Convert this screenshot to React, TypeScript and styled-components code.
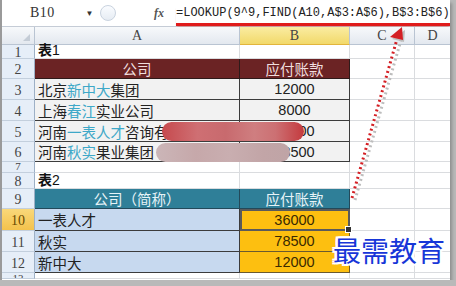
import styled, { createGlobalStyle, css } from "styled-components";

const GlobalStyle = createGlobalStyle`
  body {
    margin: 0;
    background: #b9b9b9;
    font-family: "Noto Sans CJK SC", "Liberation Sans", sans-serif;
  }
`;

type Kind = "plain" | "t1head" | "t1" | "t2head" | "t2a" | "t2b";
type Piece = [string, boolean?];

interface IRow {
  n: number;
  h: number;
  label?: string;
  kind?: "t1head" | "t1" | "t2head" | "t2";
  a?: Piece[];
  b?: string;
  clip?: "top" | "bottom";
}

const rows: IRow[] = [
  { n: 1, h: 14, label: "1" },
  { n: 2, h: 20, kind: "t1head", a: [["公司"]], b: "应付账款" },
  { n: 3, h: 21, kind: "t1", a: [["北京"], ["新中大", true], ["集团"]], b: "12000" },
  { n: 4, h: 21, kind: "t1", a: [["上海"], ["春江", true], ["实业公司"]], b: "8000" },
  { n: 5, h: 21, kind: "t1", a: [["河南"], ["一表人才", true], ["咨询有"]], b: "36000" },
  { n: 6, h: 20, kind: "t1", a: [["河南"], ["秋实", true], ["果业集团"]], b: "78500" },
  { n: 7, h: 11, clip: "bottom" },
  { n: 8, h: 16, label: "2" },
  { n: 9, h: 20, kind: "t2head", a: [["公司（简称）"]], b: "应付账款" },
  { n: 10, h: 22, kind: "t2", a: [["一表人才"]], b: "36000" },
  { n: 11, h: 21, kind: "t2", a: [["秋实"]], b: "78500" },
  { n: 12, h: 21, kind: "t2", a: [["新中大"]], b: "12000" },
  { n: 13, h: 6, clip: "top" },
];

export default function App() {
  return (
    <>
      <GlobalStyle />
      <Frame>
        <FormulaBar>
          <NameBox>
            <span>B10</span>
            <DropArrow>▼</DropArrow>
          </NameBox>
          <CancelDot />
          <Fx>fx</Fx>
          <Formula>=LOOKUP(9^9,FIND(A10,A$3:A$6),B$3:B$6)</Formula>
        </FormulaBar>

        <Sheet rowHeights={[18, ...rows.map((r) => r.h)]}>
          <Corner>
            <CornerMark />
          </Corner>
          <ColHead>A</ColHead>
          <ColHead active>B</ColHead>
          <ColHead>C</ColHead>
          <ColHead last>D</ColHead>

          {rows.map((r) => (
            <Row key={r.n} row={r} />
          ))}
        </Sheet>

        <Blob top={122} left={160} width={142} red />
        <Blob top={143} left={154} width={134} />
        <Watermark>最需教育</Watermark>
        <Arrow />
      </Frame>
    </>
  );
}

function Row({ row }: { row: IRow }) {
  const aKind: Kind =
    row.kind === "t1head" ? "t1head" : row.kind === "t1" ? "t1" : row.kind === "t2head" ? "t2head" : row.kind === "t2" ? "t2a" : "plain";
  const bKind: Kind =
    row.kind === "t1head" ? "t1head" : row.kind === "t1" ? "t1" : row.kind === "t2head" ? "t2head" : row.kind === "t2" ? "t2b" : "plain";
  const isHead = row.kind === "t1head" || row.kind === "t2head";

  return (
    <>
      <RowHead active={row.n === 10} clip={row.clip}>
        {row.n}
      </RowHead>
      <Cell kind={aKind} center={isHead}>
        {row.label && (
          <Label>
            <b>表</b>
            {row.label}
          </Label>
        )}
        {row.a?.map(([text, hl], i) => (
          <Part key={i} hl={!!hl}>
            {text}
          </Part>
        ))}
      </Cell>
      <Cell kind={bKind} center selected={row.n === 10}>
        {row.b && (isHead ? row.b : <Num>{row.b}</Num>)}
        {row.n === 10 && <FillHandle />}
      </Cell>
      <Cell kind="plain" />
      <Cell kind="plain" last />
    </>
  );
}

function Arrow() {
  return (
    <ArrowSvg width="456" height="286" viewBox="0 0 456 286">
      <line x1="355" y1="200" x2="401" y2="40" stroke="#bdbdbd" strokeWidth="3" strokeDasharray="2 3" />
      <line x1="352" y1="198" x2="397" y2="39" stroke="#d41f24" strokeWidth="3" strokeDasharray="2 3" />
      <polygon points="405,30 392,39 404,42" fill="#bdbdbd" />
      <polygon points="402,27 390,37 403,40" fill="#d41f24" />
    </ArrowSvg>
  );
}

const Frame = styled.div`
  position: relative;
  width: 450px;
  height: 280px;
  background: #fff;
  border-left: 2px solid #9a9a9a;
  box-sizing: border-box;
  display: flex;
  flex-direction: column;
  overflow: hidden;
  box-shadow: 2px 3px 3px #8e8e8e;
`;

const FormulaBar = styled.div`
  height: 26px;
  border-bottom: 1px solid #c5ccd6;
  display: flex;
  align-items: center;
  background: #fff;
  flex-shrink: 0;
`;

const NameBox = styled.div`
  width: 96px;
  padding-left: 28px;
  box-sizing: border-box;
  display: flex;
  align-items: center;
  justify-content: space-between;
  padding-right: 4px;
  font-family: "Liberation Serif", serif;
  font-size: 14px;
  color: #333;
  letter-spacing: 0.5px;
`;

const DropArrow = styled.span`
  font-size: 8px;
  color: #333;
`;

const CancelDot = styled.div`
  width: 14px;
  height: 14px;
  border-radius: 50%;
  border: 1px solid #c9d3df;
  margin-left: 2px;
  background: linear-gradient(#fafcff, #e6ecf3);
`;

const Fx = styled.span`
  margin-left: 38px;
  font-family: "Liberation Serif", serif;
  font-style: italic;
  font-weight: bold;
  font-size: 12px;
  color: #555;
  width: 20px;
`;

const Formula = styled.div`
  margin-left: 2px;
  font-family: "Liberation Mono", monospace;
  font-size: 12px;
  color: #222;
  white-space: nowrap;
  padding-bottom: 3px;
  border-bottom: 3px solid #e01b1b;
  margin-top: 6px;
  box-shadow: 0 2px 2px -1px #c88;
`;

const Sheet = styled.div<{ rowHeights: number[] }>`
  display: grid;
  grid-template-columns: 33px 205px 110px 65px 1fr;
  grid-template-rows: ${(p) => p.rowHeights.map((h) => `${h}px`).join(" ")};
`;

const headBase = css`
  background: linear-gradient(#f7f9fb, #e3e8ef);
  color: #444;
  font-family: "Liberation Serif", serif;
  font-size: 14px;
  line-height: 1;
  display: flex;
  align-items: center;
  justify-content: center;
  box-sizing: border-box;
  overflow: hidden;
`;

const Corner = styled.div`
  ${headBase};
  border-right: 1px solid #b9c4d2;
  border-bottom: 1px solid #b9c4d2;
  position: relative;
`;

const CornerMark = styled.div`
  position: absolute;
  right: 4px;
  bottom: 3px;
  width: 0;
  height: 0;
  border-left: 7px solid transparent;
  border-bottom: 7px solid #c4ccd6;
`;

const ColHead = styled.div<{ active?: boolean; last?: boolean }>`
  ${headBase};
  border-right: ${(p) => (p.last ? "none" : "1px solid #b9c4d2")};
  border-bottom: 1px solid #b9c4d2;
  ${(p) =>
    p.active &&
    css`
      background: linear-gradient(#faeca2, #f2d96a);
      border-bottom: 1px solid #e2b53c;
    `}
`;

const RowHead = styled.div<{ active?: boolean; clip?: "top" | "bottom" }>`
  ${headBase};
  background: ${(p) => (p.active ? "linear-gradient(#f9d87a, #f3c24c)" : "#e6eef8")};
  border-right: 1px solid #9db0c6;
  border-bottom: 1px solid #c3cfdd;
  align-items: ${(p) => (p.clip === "top" ? "flex-start" : p.clip === "bottom" ? "flex-end" : "center")};
  padding-top: ${(p) => (p.clip ? "0" : "3px")};
  font-size: ${(p) => (p.clip ? "11px" : "14px")};
  color: ${(p) => (p.active ? "#6a4a00" : "#444")};
`;

const kindStyles: Record<Kind, ReturnType<typeof css>> = {
  plain: css`
    background: #fff;
    border-right: 1px solid #dadcdf;
    border-bottom: 1px solid #dadcdf;
  `,
  t1head: css`
    background: #6b2324;
    color: #f0dede;
    border-right: 1px solid #2e1a1a;
    border-bottom: 1px solid #2e1a1a;
  `,
  t1: css`
    background: #f2f2f2;
    color: #222;
    border-right: 1px solid #3c3c3c;
    border-bottom: 1px solid #3c3c3c;
  `,
  t2head: css`
    background: #2f7f98;
    color: #e6f3f7;
    border-right: 1px solid #23495a;
    border-bottom: 1px solid #23495a;
  `,
  t2a: css`
    background: #c7d9ef;
    color: #222;
    border-right: 1px solid #3c3c3c;
    border-bottom: 1px solid #3c3c3c;
  `,
  t2b: css`
    background: #fdbf10;
    color: #3a2a00;
    border-right: 1px solid #6a5a30;
    border-bottom: 1px solid #6a5a30;
  `,
};

const Cell = styled.div<{ kind: Kind; center?: boolean; selected?: boolean; last?: boolean }>`
  position: relative;
  box-sizing: border-box;
  display: flex;
  align-items: center;
  justify-content: ${(p) => (p.center ? "center" : "flex-start")};
  padding-left: ${(p) => (p.center ? "0" : "3px")};
  font-size: 14.5px;
  white-space: nowrap;
  overflow: visible;
  ${(p) => kindStyles[p.kind]};
  ${(p) => p.last && "border-right: none;"}
  ${(p) =>
    p.selected &&
    css`
      outline: 2px solid #5a5a5a;
      outline-offset: -2px;
      z-index: 1;
    `}
`;

const Label = styled.span`
  font-family: "Liberation Sans", "Noto Sans CJK SC", sans-serif;
  font-size: 14px;
  color: #111;
  line-height: 1;
  align-self: flex-end;
  padding-bottom: 1px;

  b {
    font-family: "Noto Sans CJK SC", sans-serif;
    font-weight: 700;
  }
`;

const Part = styled.span<{ hl: boolean }>`
  color: ${(p) => (p.hl ? "#3ea8c8" : "inherit")};
`;

const Num = styled.span`
  font-family: "Liberation Sans", sans-serif;
  font-size: 14.5px;
`;

const FillHandle = styled.div`
  position: absolute;
  right: -3px;
  bottom: -3px;
  width: 5px;
  height: 5px;
  background: #333;
  border: 1px solid #fff;
`;

const Blob = styled.div<{ top: number; left: number; width: number; red?: boolean }>`
  position: absolute;
  top: ${(p) => p.top}px;
  left: ${(p) => p.left}px;
  width: ${(p) => p.width}px;
  height: 19px;
  border-radius: 10px;
  z-index: 2;
  background: ${(p) =>
    p.red
      ? "linear-gradient(90deg, #c64a4e 0%, #cf6f73 25%, #c86a6e 45%, #cf7e80 65%, #cc7073 80%, #c43a3e 100%)"
      : "linear-gradient(90deg, #cbb6b8 0%, #c6a8aa 30%, #c9aeb0 55%, #c2a5a7 80%, #bfa4a6 100%)"};
`;

const Watermark = styled.div`
  position: absolute;
  left: 331px;
  top: 236px;
  z-index: 3;
  white-space: nowrap;
  font-family: "Noto Sans CJK SC", sans-serif;
  font-size: 28px;
  line-height: 1;
  color: #1736d8;
  text-shadow: -2px 0 #fff, 2px 0 #fff, 0 -2px #fff, 0 2px #fff, -2px -2px #fff, 2px 2px #fff, -2px 2px #fff,
    2px -2px #fff;
`;

const ArrowSvg = styled.svg`
  position: absolute;
  top: 0;
  left: -2px;
  z-index: 4;
  pointer-events: none;
`;
